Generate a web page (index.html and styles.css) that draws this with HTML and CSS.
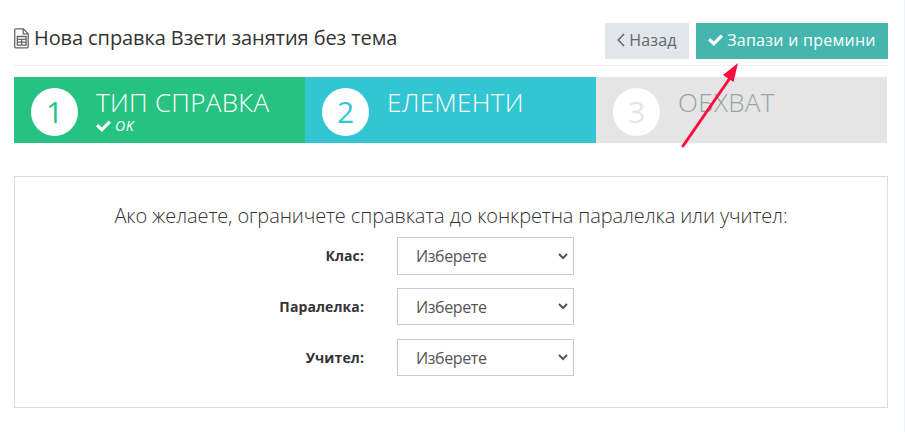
FILE: index.html
```html
<!DOCTYPE html>
<html lang="bg">
<head>
    <meta charset="UTF-8">
    <meta name="viewport" content="width=device-width, initial-scale=1.0">
    <title>Нова справка</title>
    <link rel="stylesheet" href="styles.css">
</head>
<body>
    <div class="page">
        <header class="page-header">
            <h1>
                <svg class="icon-report" viewBox="0 0 15 21" fill="none" stroke="#666" stroke-width="1.3">
                    <path d="M1.9 .8h7.4l4.9 4.9v12.9q0 1.2-1.2 1.2H1.9Q.7 19.8.7 18.6V2Q.7.8 1.9.8zM9.2 1v4.8H14"/>
                    <path d="M3.3 8.5h8.8v8.7H3.3zM3.3 11.3h8.8M3.3 14.2h8.8M7.7 11.3v5.9"/>
                </svg>
                <span>Нова справка Взети занятия без тема</span>
            </h1>
            <div class="actions">
                <button class="btn btn-back">
                    <svg class="icon-angle" viewBox="0 0 8 14" fill="none" stroke="currentColor" stroke-width="1.5"><path d="M7 1L1.3 7 7 13"/></svg>
                    <span>Назад</span>
                </button>
                <button class="btn btn-save">
                    <svg class="icon-check" viewBox="0 0 15 12" fill="currentColor"><path d="M0 6.3l2.3-2.3 3.5 3.4L12.7.5 15 2.8 5.8 12z"/></svg>
                    <span>Запази и премини</span>
                </button>
            </div>
        </header>

        <div class="steps">
            <div class="step done">
                <div class="number">1</div>
                <div class="step-text">
                    <div class="step-title">ТИП СПРАВКА</div>
                    <div class="step-status">
                        <svg class="icon-check" viewBox="0 0 15 12" fill="currentColor"><path d="M0 6.3l2.3-2.3 3.5 3.4L12.7.5 15 2.8 5.8 12z"/></svg>
                        <em>OK</em>
                    </div>
                </div>
            </div>
            <div class="step active">
                <div class="number">2</div>
                <div class="step-text">
                    <div class="step-title">ЕЛЕМЕНТИ</div>
                </div>
            </div>
            <div class="step">
                <div class="number">3</div>
                <div class="step-text">
                    <div class="step-title">ОБХВАТ</div>
                </div>
            </div>
        </div>

        <form class="panel">
            <h2>Ако желаете, ограничете справката до конкретна паралелка или учител:</h2>
            <div class="form-row">
                <label for="grade">Клас:</label>
                <div class="select-box"><select id="grade"><option>Изберете</option></select></div>
            </div>
            <div class="form-row">
                <label for="group">Паралелка:</label>
                <div class="select-box"><select id="group"><option>Изберете</option></select></div>
            </div>
            <div class="form-row">
                <label for="teacher">Учител:</label>
                <div class="select-box"><select id="teacher"><option>Изберете</option></select></div>
            </div>
        </form>

        <!-- pointer to the save button -->
        <svg class="arrow" viewBox="0 0 60 88">
            <path d="M2 83L49 15" stroke="#ff0b3f" stroke-width="3" stroke-linecap="round"/>
            <path d="M57 0L42 12 52.5 19z" fill="#ff0b3f"/>
        </svg>
    </div>
</body>
</html>
```
FILE: styles.css
```css
:root {
    --green: #26c281;
    --cyan: #32c5d2;
    --teal: #44b6ae;
    --gray: #e5e5e5;
}

* {
    box-sizing: border-box;
}

body {
    margin: 0;
    font-family: "Open Sans", sans-serif;
    font-size: 14px;
    color: #333;
    background: #fff;
}

.page {
    position: relative;
    height: 432px;
    padding: 23px 16px 0 14px;
    border-right: 1px solid #eef0f1;
}

.page-header {
    display: flex;
    justify-content: space-between;
    height: 43px;
    border-bottom: 1px solid #eee;
}

h1 {
    display: flex;
    gap: 5px;
    margin: 0;
    font-size: 20px;
    font-weight: 400;
    line-height: 30px;
    letter-spacing: -0.09px;
}

.icon-report {
    width: 15px;
    height: 21px;
    margin-top: 5px;
}

.actions {
    display: flex;
    gap: 7px;
}

.btn {
    display: flex;
    align-items: center;
    justify-content: center;
    height: 36px;
    padding: 0 0 2px;
    border: 0;
    font-family: inherit;
    font-size: 16px;
}

.btn-back {
    width: 84px;
    gap: 4px;
    background: #e1e5ec;
    color: #666;
    letter-spacing: 0.2px;
}

.btn-save {
    width: 192px;
    gap: 4px;
    background: var(--teal);
    color: #fff;
    font-weight: 500;
    letter-spacing: 0.27px;
}

.icon-angle {
    width: 8px;
    height: 14px;
}

.icon-check {
    width: 15px;
    height: 12px;
}

/* Steps */
.steps {
    display: flex;
    width: 873px;
    height: 66px;
    margin-top: 11px;
}

.step {
    display: flex;
    flex: 1;
    padding: 11px 0 0 17px;
    background: var(--gray);
    color: #95a5a6;
}

.number {
    width: 47px;
    height: 48px;
    border-radius: 50%;
    background: #fff;
    color: var(--gray);
    font-size: 30px;
    line-height: 48px;
    text-align: center;
}

.step-text {
    margin-left: 18px;
}

.step-title {
    font-size: 26px;
    font-weight: 300;
    line-height: 28px;
    letter-spacing: 0.3px;
}

.step-status {
    display: flex;
    align-items: center;
    gap: 4px;
    font-size: 14px;
    line-height: 19px;
    letter-spacing: 0.6px;
}

.step.done {
    background: var(--green);
    color: #fff;
}

.step.done .number {
    color: var(--green);
}

.step.active {
    background: var(--cyan);
    color: #fff;
}

.step.active .number {
    color: var(--cyan);
}

/* Form */
.panel {
    height: 232px;
    margin-top: 33px;
    padding-top: 24px;
    border: 1px solid #ddd;
}

h2 {
    margin: 0 0 6px;
    font-size: 20px;
    font-weight: 300;
    line-height: 30px;
    letter-spacing: -0.1px;
    text-align: center;
}

.form-row {
    display: flex;
    gap: 33px;
    height: 37px;
    margin-bottom: 14px;
}

.form-row:first-of-type {
    height: 38px;
    margin-bottom: 13px;
}

.form-row label {
    width: 349px;
    font-weight: 700;
    line-height: 37px;
    letter-spacing: 0.1px;
    text-align: right;
}

.select-box {
    width: 177px;
    padding-right: 2px;
    border: 1px solid #c2cad8;
}

.select-box select {
    display: block;
    width: 100%;
    height: 100%;
    padding: 0 0 0 14px;
    border: 0;
    background: #fff;
    color: #555;
    font-family: inherit;
    font-size: 16px;
    letter-spacing: -0.4px;
}

.arrow {
    position: absolute;
    left: 681px;
    top: 63px;
    width: 60px;
    height: 88px;
}
```
